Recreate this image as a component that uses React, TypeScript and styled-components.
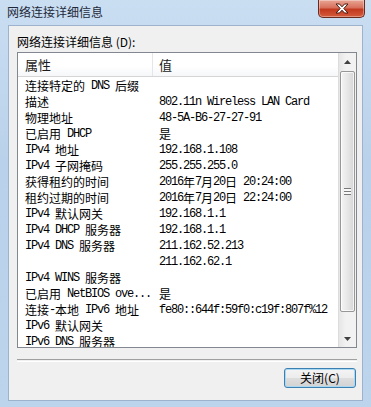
import React from "react";
import styled, { createGlobalStyle } from "styled-components";

const GlobalStyle = createGlobalStyle`
  html, body {
    margin: 0;
    padding: 0;
    background: #bcd3eb;
  }
`;

const CJK_FONT = `"Noto Sans CJK SC", "Noto Sans", sans-serif`;
const LIST_FONT = `"Liberation Mono", "Noto Sans CJK SC", monospace`;

interface Detail {
  name: string;
  value: string;
}

const DETAILS: Detail[] = [
  { name: "连接特定的 DNS 后缀", value: "" },
  { name: "描述", value: "802.11n Wireless LAN Card" },
  { name: "物理地址", value: "48-5A-B6-27-27-91" },
  { name: "已启用 DHCP", value: "是" },
  { name: "IPv4 地址", value: "192.168.1.108" },
  { name: "IPv4 子网掩码", value: "255.255.255.0" },
  { name: "获得租约的时间", value: "2016年7月20日 20:24:00" },
  { name: "租约过期的时间", value: "2016年7月20日 22:24:00" },
  { name: "IPv4 默认网关", value: "192.168.1.1" },
  { name: "IPv4 DHCP 服务器", value: "192.168.1.1" },
  { name: "IPv4 DNS 服务器", value: "211.162.52.213" },
  { name: "", value: "211.162.62.1" },
  { name: "IPv4 WINS 服务器", value: "" },
  { name: "已启用 NetBIOS ove...", value: "是" },
  { name: "连接-本地 IPv6 地址", value: "fe80::644f:59f0:c19f:807f%12" },
  { name: "IPv6 默认网关", value: "" },
  { name: "IPv6 DNS 服务器", value: "" },
];

const Window = styled.div`
  width: 371px;
  height: 407px;
  box-sizing: border-box;
  display: flex;
  flex-direction: column;
  padding: 0 8px 6px 8px;
  background: linear-gradient(180deg, #cadef2 0%, #b9d1ea 40%, #bcd4ec 100%);
`;

const TitleBar = styled.div`
  height: 25px;
  display: flex;
  justify-content: space-between;
  align-items: flex-start;
`;

const Title = styled.div`
  font-family: ${CJK_FONT};
  font-size: 12px;
  line-height: 24px;
  color: #1e2a3a;
  margin-left: -1px;
`;

const CloseButton = styled.div`
  width: 45px;
  height: 17px;
  margin-right: -2px;
  display: flex;
  align-items: center;
  justify-content: center;
  border: 1px solid #6b2a1e;
  border-top: none;
  border-radius: 0 0 5px 5px;
  background: linear-gradient(180deg, #e9a594 0%, #d7705c 45%, #c2391f 55%, #d45b3c 100%);
  box-shadow: inset 0 0 0 1px rgba(255, 255, 255, 0.35);
`;

const Client = styled.div`
  flex: 1;
  display: flex;
  flex-direction: column;
  background: #f0f0f0;
  border: 1px solid #9db3cd;
  padding: 8px 5px 0 8px;
`;

const Label = styled.div`
  font-family: ${CJK_FONT};
  font-size: 12px;
  line-height: 16px;
  color: #000;
  margin-bottom: 2px;
`;

const ListBox = styled.div`
  height: 296px;
  box-sizing: border-box;
  border: 1px solid #828790;
  background: #fff;
  display: flex;
`;

const ListArea = styled.div`
  flex: 1;
  overflow: hidden;
`;

const Header = styled.div`
  height: 23px;
  display: grid;
  grid-template-columns: 134px 1fr;
  border-bottom: 1px solid #d5d5d5;
  background: linear-gradient(180deg, #ffffff 0%, #ffffff 55%, #f6f7f9 100%);
  margin-bottom: 1px;
`;

const HeaderCell = styled.div<{ $divider?: boolean }>`
  font-family: ${CJK_FONT};
  font-size: 13px;
  line-height: 23px;
  color: #1a1a1a;
  padding-left: ${({ $divider }) => ($divider ? "6px" : "7px")};
  border-left: ${({ $divider }) => ($divider ? "1px solid #e3e6ea" : "none")};
`;

const Row = styled.div`
  height: 16px;
  display: grid;
  grid-template-columns: 134px 1fr;
`;

const Cell = styled.div`
  height: 16px;
  font-family: ${LIST_FONT};
  font-size: 12px;
  line-height: 16px;
  color: #000;
  white-space: nowrap;
  padding-left: 7px;
`;

const Latin = styled.span`
  display: inline-block;
  height: 16px;
  line-height: 16px;
  vertical-align: top;
  font-family: "Liberation Mono", monospace;
  letter-spacing: -1.2px;
  white-space: pre;
`;

const Han = styled.span`
  display: inline-block;
  height: 16px;
  line-height: 16px;
  vertical-align: top;
  font-family: ${CJK_FONT};
`;

const ScrollBar = styled.div`
  width: 17px;
  display: flex;
  flex-direction: column;
  border-left: 1px solid #dcdcdc;
  background: linear-gradient(90deg, #e6e6e6 0%, #f2f2f2 40%, #f2f2f2 100%);
`;

const ArrowBox = styled.div`
  height: 17px;
  display: flex;
  align-items: center;
  justify-content: center;
`;

const Track = styled.div`
  flex: 1;
  padding: 1px 1px 0 1px;
`;

const Thumb = styled.div`
  height: 241px;
  box-sizing: border-box;
  border: 1px solid #979797;
  border-radius: 2px;
  background: linear-gradient(90deg, #f4f4f4 0%, #e8e8e8 45%, #d6d6d6 100%);
  box-shadow: inset 0 0 0 1px rgba(255, 255, 255, 0.7);
  display: flex;
  align-items: center;
  justify-content: center;
`;

const Gripper = styled.div`
  width: 7px;
  height: 7px;
  background: repeating-linear-gradient(
    180deg,
    #7a7a7a 0px,
    #7a7a7a 1px,
    #f8f8f8 1px,
    #f8f8f8 3px
  );
  margin-top: -1px;
`;

const Separator = styled.div`
  margin-top: 11px;
  height: 1px;
  border-top: 1px solid #a0a0a0;
  border-bottom: 1px solid #ffffff;
`;

const Footer = styled.div`
  display: flex;
  justify-content: flex-end;
  margin-top: 6px;
  margin-right: 1px;
`;

const Button = styled.div`
  width: 72px;
  height: 20px;
  box-sizing: border-box;
  border: 1px solid #3c7fb1;
  border-radius: 3px;
  background: linear-gradient(180deg, #f4f4f4 0%, #ececec 50%, #dedede 50%, #d2d2d2 100%);
  box-shadow: inset 0 0 0 1px #a9d8f3;
  font-family: ${CJK_FONT};
  font-size: 12px;
  line-height: 18px;
  text-align: center;
  color: #000;
`;

const renderRuns = (text: string) =>
  text
    .split(/([\u3000-\u9fff\uff00-\uffef]+)/)
    .filter(Boolean)
    .map((part, i) =>
      /[\u3000-\u9fff\uff00-\uffef]/.test(part) ? (
        <Han key={i}>{part}</Han>
      ) : (
        <Latin key={i}>{part}</Latin>
      )
    );

const CloseGlyph: React.FC = () => (
  <svg width="14" height="11" viewBox="0 0 14 11">
    <path
      d="M1 1 H4.5 L7 3.8 L9.5 1 H13 L8.8 5.5 L13 10 H9.5 L7 7.2 L4.5 10 H1 L5.2 5.5 Z"
      fill="#ffffff"
      stroke="#4b1a10"
      strokeWidth="1"
      strokeLinejoin="round"
    />
  </svg>
);

const Arrow: React.FC<{ up?: boolean }> = ({ up }) => (
  <svg width="7" height="4" viewBox="0 0 7 4">
    <path d={up ? "M0 4 L3.5 0 L7 4 Z" : "M0 0 L7 0 L3.5 4 Z"} fill="#404040" />
  </svg>
);

const App: React.FC = () => (
  <>
    <GlobalStyle />
    <Window>
      <TitleBar>
        <Title>网络连接详细信息</Title>
        <CloseButton>
          <CloseGlyph />
        </CloseButton>
      </TitleBar>
      <Client>
        <Label>网络连接详细信息 (D):</Label>
        <ListBox>
          <ListArea>
            <Header>
              <HeaderCell>属性</HeaderCell>
              <HeaderCell $divider>值</HeaderCell>
            </Header>
            {DETAILS.map((d, i) => (
              <Row key={i}>
                <Cell>{renderRuns(d.name)}</Cell>
                <Cell>{renderRuns(d.value)}</Cell>
              </Row>
            ))}
          </ListArea>
          <ScrollBar>
            <ArrowBox>
              <Arrow up />
            </ArrowBox>
            <Track>
              <Thumb>
                <Gripper />
              </Thumb>
            </Track>
            <ArrowBox>
              <Arrow />
            </ArrowBox>
          </ScrollBar>
        </ListBox>
        <Separator />
        <Footer>
          <Button>关闭(C)</Button>
        </Footer>
      </Client>
    </Window>
  </>
);

export default App;
